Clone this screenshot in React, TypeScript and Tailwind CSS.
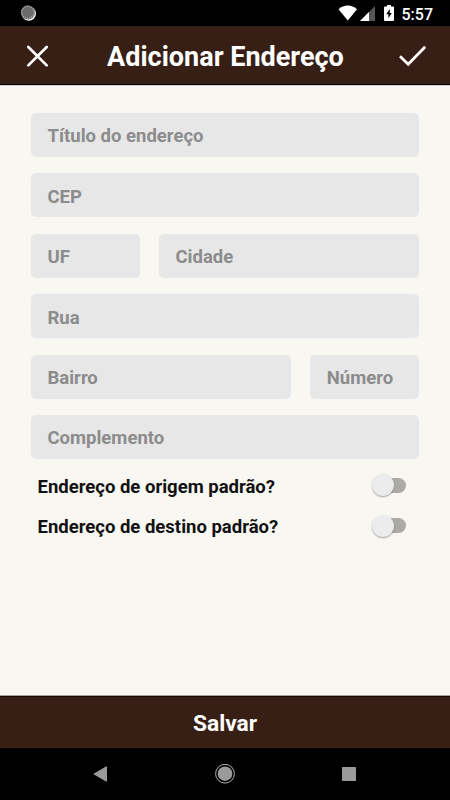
import { useState } from "react";

interface FieldProps {
  label: string;
  className?: string;
}

function Field({ label, className = "w-full" }: FieldProps) {
  return (
    <div className={`h-11 rounded-[5px] bg-[#e7e7e7] pl-[16.5px] pt-[3px] flex items-center ${className}`}>
      <span className="text-[18.5px] leading-none font-bold text-[#8c8c8c] whitespace-nowrap">{label}</span>
    </div>
  );
}

function ToggleRow({ label }: { label: string }) {
  const [on, setOn] = useState(false);

  return (
    <div className="h-[40.5px] pl-[6.5px] pr-[13px] flex items-center justify-between">
      <span className="pt-[3px] text-[18.5px] leading-none font-bold text-[#111] whitespace-nowrap">{label}</span>
      <button
        onClick={() => setOn(!on)}
        aria-label={label}
        className={`w-[32px] h-[15px] rounded-full flex items-center ${on ? "bg-[#a08070] justify-end" : "bg-[#abaaa6]"}`}
      >
        <span className="w-[22px] h-[22px] shrink-0 -ml-[2px] rounded-full bg-[#ececec] shadow-[0_1px_1.5px_rgba(0,0,0,0.35)]" />
      </button>
    </div>
  );
}

function StatusBar() {
  return (
    <div className="h-[26px] bg-black pl-[20px] pr-[17px] flex items-center justify-between shrink-0">
      <svg width="17" height="17" viewBox="0 0 17 17">
        <circle cx="8.8" cy="8.6" r="7.2" fill="#f2f2f2" />
        <circle cx="7.8" cy="7.4" r="7.1" fill="#6b6b6b" />
        <circle cx="7.8" cy="7.4" r="6" fill="none" stroke="#b5b5b5" strokeWidth="1.1" strokeDasharray="1 1.2" />
      </svg>
      <div className="flex items-center">
        <svg width="20" height="16" viewBox="0 0 20 16" className="mr-[2px]">
          <path d="M0.5 4.2C6 -0.8 13.5 -0.8 19 4.2L9.8 15.5Z" fill="#fff" />
        </svg>
        <svg width="15" height="15" viewBox="0 0 15 15" className="mr-[9px]">
          <path d="M15 0V15H0Z" fill="#555" />
          <path d="M9 6V15H0Z" fill="#fff" />
        </svg>
        <svg width="10" height="16" viewBox="0 0 10 16" className="mr-[8px]">
          <path d="M3 0H7V1.6H9Q10 1.6 10 2.6V15Q10 16 9 16H1Q0 16 0 15V2.6Q0 1.6 1 1.6H3Z" fill="#fff" />
          <path d="M5.8 4L2.2 9.2H4.4V13.2L7.8 8H5.8Z" fill="#000" />
        </svg>
        <span className="pt-[3px] text-[16px] leading-none font-medium text-white">5:57</span>
      </div>
    </div>
  );
}

export default function App() {
  return (
    <div className="w-[450px] h-[800px] bg-[#f8f7f2] flex flex-col overflow-hidden font-['Roboto',sans-serif]">
      <StatusBar />

      <header className="h-[59px] shrink-0 bg-[#381f15] border-b border-black pt-[2px] pl-[26px] pr-[23px] flex items-center justify-between">
        <button aria-label="Fechar">
          <svg width="23" height="23" viewBox="0 0 23 23" fill="none" stroke="#fff" strokeWidth="2.7" strokeLinecap="round">
            <path d="M2.3 2L20.7 20.4M20.7 2L2.3 20.4" />
          </svg>
        </button>
        <h1 className="pl-[3px] pt-[3px] text-[27px] leading-none font-bold text-white whitespace-nowrap">Adicionar Endereço</h1>
        <button aria-label="Confirmar">
          <svg width="28" height="22" viewBox="0 0 28 22" fill="none" stroke="#fff" strokeWidth="2.8">
            <path d="M1 11.2L9.2 19.2L26.2 1.8" />
          </svg>
        </button>
      </header>

      <main className="flex-1 border-t border-[#d4d3cf] px-[31px] pt-[27px]">
        <div className="flex flex-col gap-[16.45px]">
          <Field label="Título do endereço" />
          <Field label="CEP" />
          <div className="flex justify-between">
            <Field label="UF" className="w-[108.5px]" />
            <Field label="Cidade" className="w-[260px]" />
          </div>
          <Field label="Rua" />
          <div className="flex justify-between">
            <Field label="Bairro" className="w-[260px]" />
            <Field label="Número" className="w-[108.7px]" />
          </div>
          <Field label="Complemento" />
        </div>
        <div className="pt-[6px]">
          <ToggleRow label="Endereço de origem padrão?" />
          <ToggleRow label="Endereço de destino padrão?" />
        </div>
      </main>

      <div className="h-[53px] shrink-0 border-t border-[#a3a29b] flex">
        <button className="flex-1 bg-[#381f15] border-t border-[#180b06] pt-[3px] text-[22.8px] leading-none font-bold text-white">
          Salvar
        </button>
      </div>

      {/* Android navigation */}
      <nav className="h-[52px] shrink-0 bg-black pl-[93px] pr-[94px] flex items-center justify-between">
        <svg width="14" height="16" viewBox="0 0 14 16" fill="#9a9a9a">
          <path d="M13 0.5Q14 0 14 1V15Q14 16 13 15.4L1 8.6Q0 8 1 7.4Z" />
        </svg>
        <svg width="20" height="20" viewBox="0 0 20 20">
          <circle cx="10" cy="9.7" r="9.4" fill="none" stroke="#b0b0b0" strokeWidth="1" />
          <circle cx="10" cy="9.7" r="7.3" fill="#9a9a9a" />
        </svg>
        <svg width="14" height="14" viewBox="0 0 14 14" fill="#9a9a9a">
          <rect width="14" height="14" rx="0.8" />
        </svg>
      </nav>
    </div>
  );
}
